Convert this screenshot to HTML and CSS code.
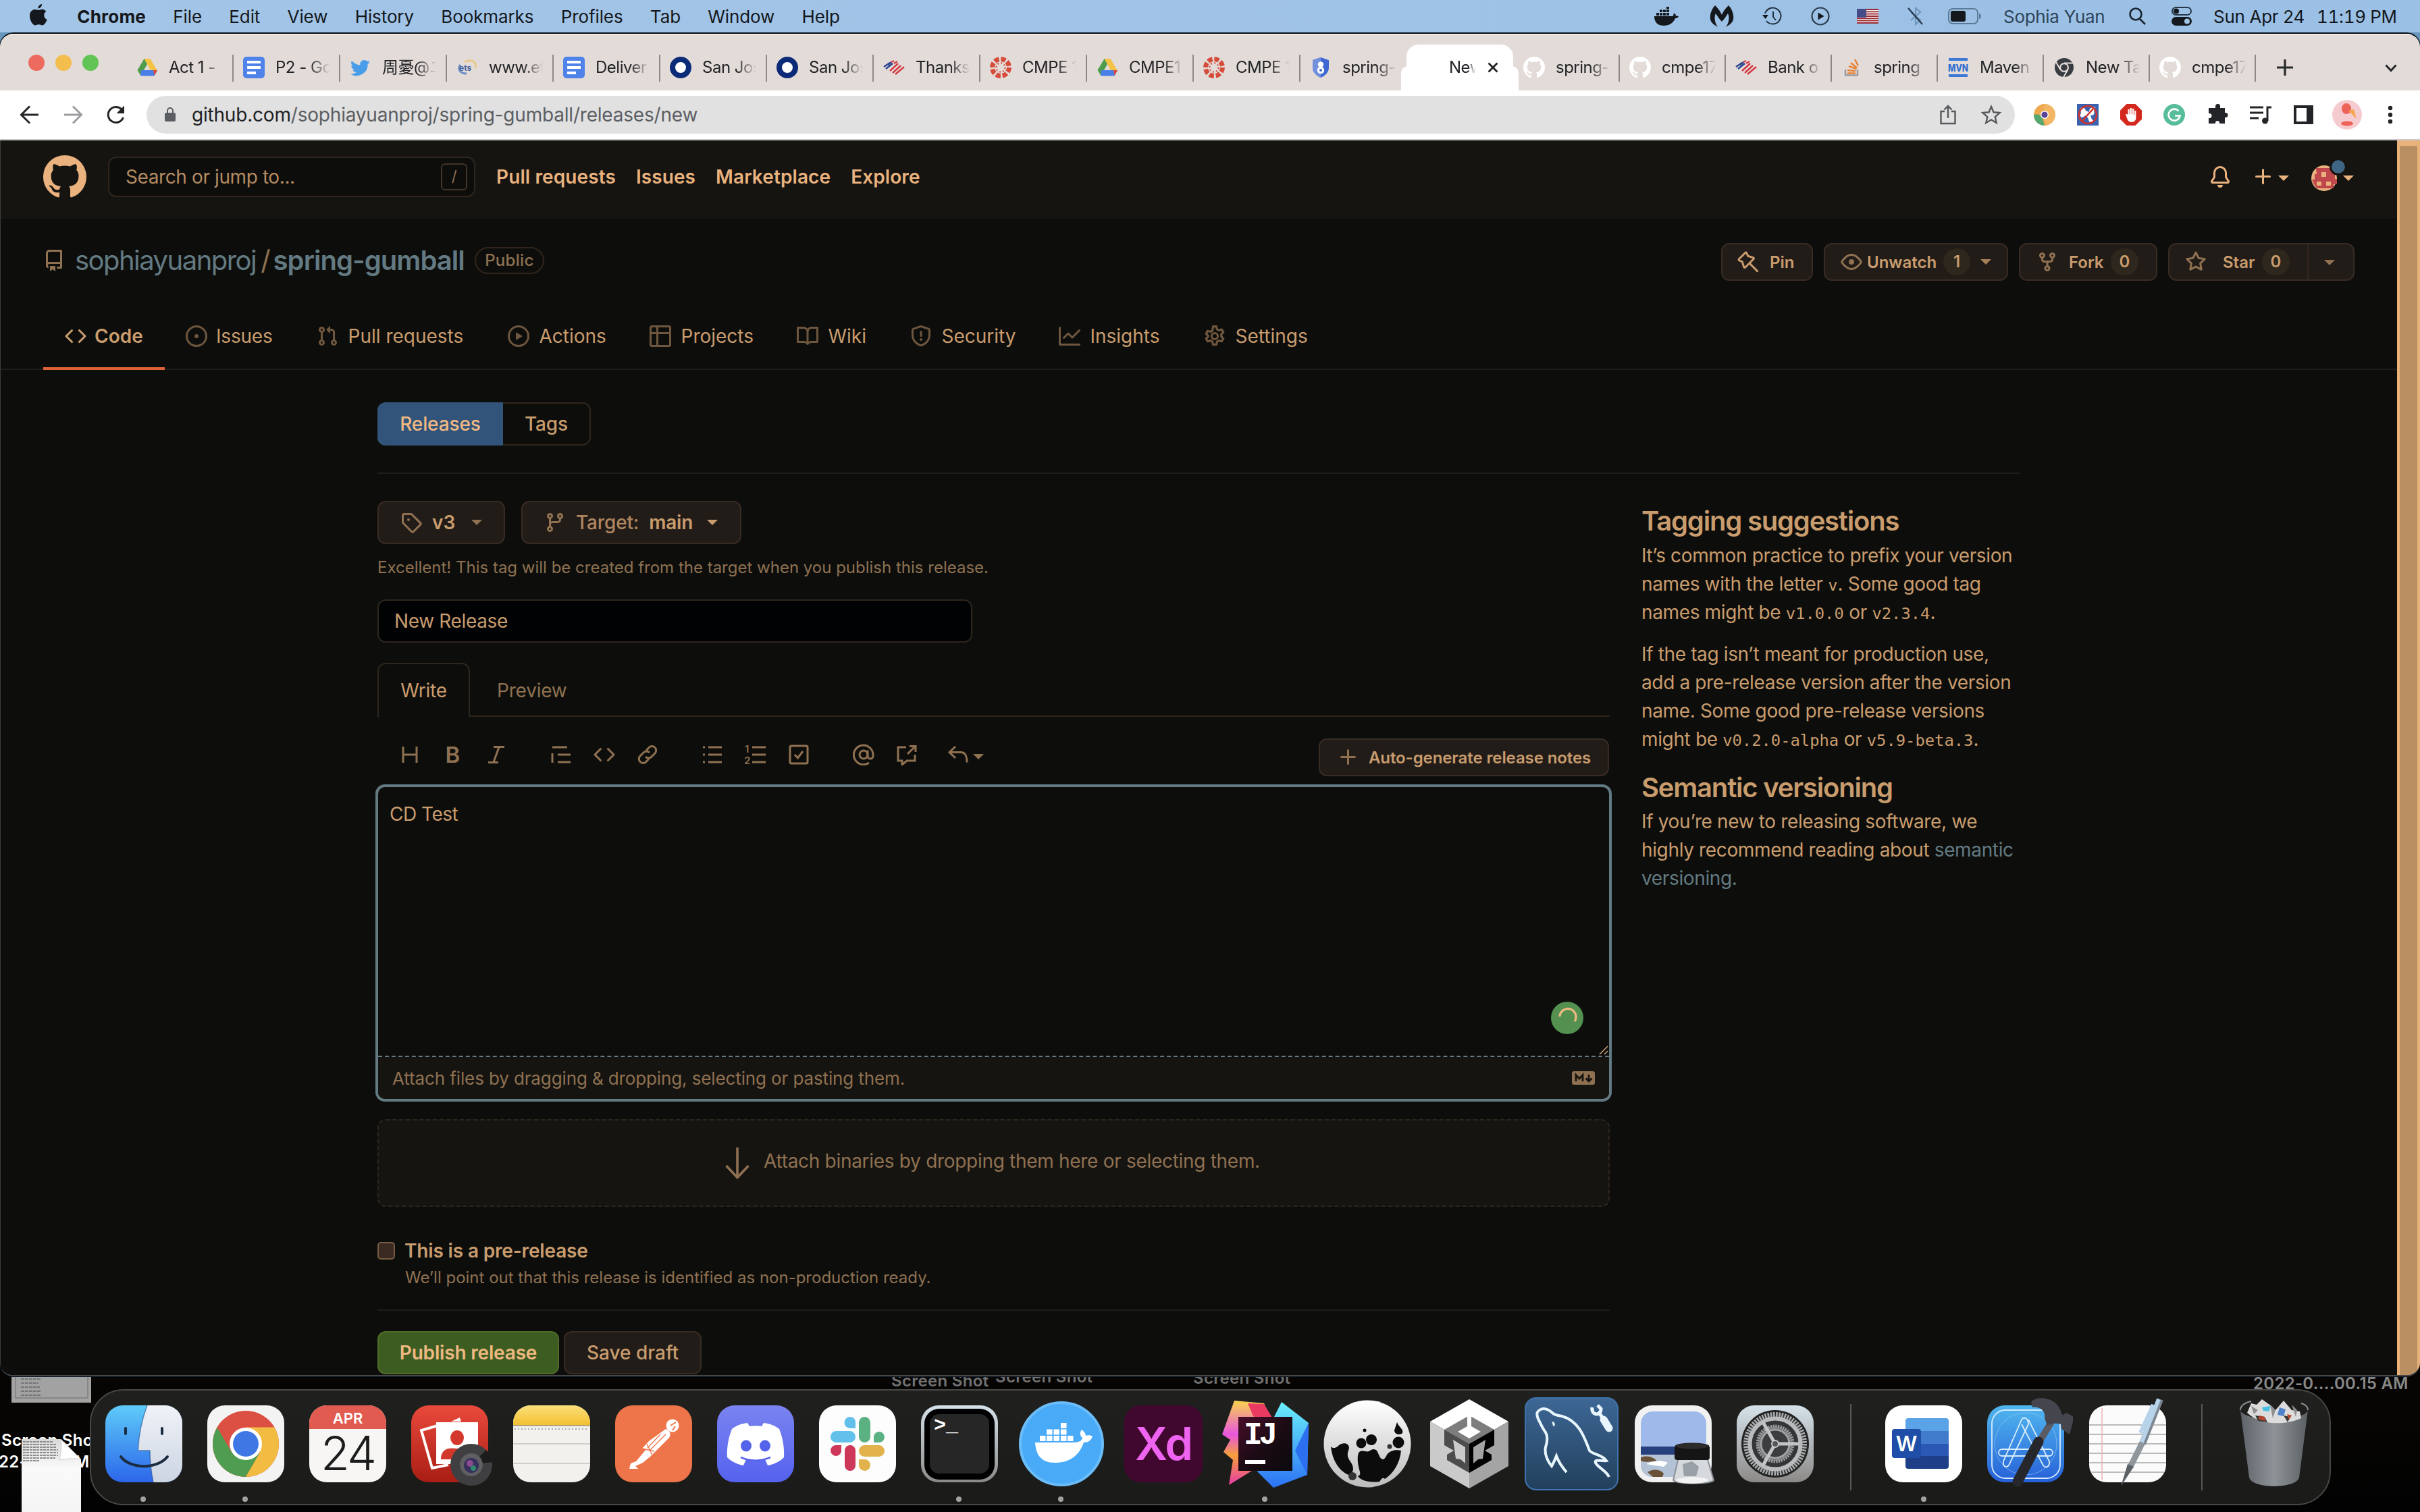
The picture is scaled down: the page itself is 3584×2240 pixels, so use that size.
FILE: index.html
```html
<!DOCTYPE html>
<html lang="en">
<head>
<meta charset="utf-8">
<title>New release · sophiayuanproj/spring-gumball</title>
<link rel="stylesheet" href="styles.css">
</head>
<body>
<svg class="defs" width="0" height="0" aria-hidden="true">
  <defs>
    <linearGradient id="g-finder" x1="0" y1="0" x2="0" y2="1"><stop offset="0" stop-color="#5ecbf9"/><stop offset="1" stop-color="#2c66ea"/></linearGradient>
    <linearGradient id="g-face" x1="0" y1="0" x2="0" y2="1"><stop offset="0" stop-color="#f0f2f8"/><stop offset="1" stop-color="#ccd5e2"/></linearGradient>
    <linearGradient id="g-red" x1="0" y1="0" x2="0" y2="1"><stop offset="0" stop-color="#ea4a3c"/><stop offset="1" stop-color="#a81d14"/></linearGradient>
    <linearGradient id="g-yellow" x1="0" y1="0" x2="0" y2="1"><stop offset="0" stop-color="#fbe07a"/><stop offset="1" stop-color="#f3c033"/></linearGradient>
    <linearGradient id="g-discord" x1="0" y1="0" x2="0" y2="1"><stop offset="0" stop-color="#7a83f0"/><stop offset="1" stop-color="#5562ee"/></linearGradient>
    <linearGradient id="g-steel" x1="0" y1="0" x2="0" y2="1"><stop offset="0" stop-color="#d5e2ea"/><stop offset="1" stop-color="#8c8a88"/></linearGradient>
    <linearGradient id="g-ball" x1="0" y1="0" x2="0" y2="1"><stop offset="0" stop-color="#ffffff"/><stop offset="1" stop-color="#bcbcbc"/></linearGradient>
    <linearGradient id="g-mysql" x1="0" y1="0" x2="0" y2="1"><stop offset="0" stop-color="#3d6796"/><stop offset="1" stop-color="#22405c"/></linearGradient>
    <linearGradient id="g-xcode" x1="0" y1="0" x2="0" y2="1"><stop offset="0" stop-color="#50b7ee"/><stop offset="1" stop-color="#2660d8"/></linearGradient>
    <linearGradient id="g-trash" x1="0" y1="0" x2="1" y2="0"><stop offset="0" stop-color="#5d6368"/><stop offset=".5" stop-color="#8d9397"/><stop offset="1" stop-color="#5b6064"/></linearGradient>
    <linearGradient id="g-ij1" x1="0" y1="0" x2="0" y2="1"><stop offset="0" stop-color="#f9d34c"/><stop offset=".4" stop-color="#e956df"/><stop offset=".65" stop-color="#f5a03a"/><stop offset="1" stop-color="#e83aa6"/></linearGradient>
    <linearGradient id="g-ij2" x1="0" y1="0" x2="0" y2="1"><stop offset="0" stop-color="#6af0fb"/><stop offset="1" stop-color="#2c72f5"/></linearGradient>
    <linearGradient id="g-ij3" x1="0" y1="0" x2="1" y2="1"><stop offset="0" stop-color="#4a0e2a"/><stop offset=".5" stop-color="#1c0b14"/><stop offset="1" stop-color="#0a0a0c"/></linearGradient>
    <linearGradient id="g-paper" x1="0" y1="0" x2="0" y2="1"><stop offset="0" stop-color="#d8d8d8"/><stop offset=".4" stop-color="#fafafa"/><stop offset="1" stop-color="#f4f4f4"/></linearGradient>
    <clipPath id="tile"><rect x="-57" y="-57" width="114" height="114" rx="26"/></clipPath>
    <symbol id="github" viewBox="0 0 16 16"><path fill-rule="evenodd" d="M8 0C3.58 0 0 3.58 0 8c0 3.54 2.29 6.53 5.47 7.59.4.07.55-.17.55-.38 0-.19-.01-.82-.01-1.49-2.01.37-2.53-.49-2.69-.94-.09-.23-.48-.94-.82-1.13-.28-.15-.68-.52-.01-.53.63-.01 1.08.58 1.23.82.72 1.21 1.87.87 2.33.66.07-.52.28-.87.51-1.07-1.78-.2-3.64-.89-3.64-3.95 0-.87.31-1.59.82-2.15-.08-.2-.36-1.02.08-2.12 0 0 .67-.21 2.2.82.64-.18 1.32-.27 2-.27.68 0 1.36.09 2 .27 1.53-1.04 2.2-.82 2.2-.82.44 1.1.16 1.92.08 2.12.51.56.82 1.27.82 2.15 0 3.07-1.87 3.75-3.65 3.95.29.25.54.73.54 1.48 0 1.07-.01 1.93-.01 2.2 0 .21.15.46.55.38A8.013 8.013 0 0016 8c0-4.42-3.58-8-8-8z"/></symbol>
    <symbol id="repo" viewBox="0 0 16 16"><path fill-rule="evenodd" d="M2 2.5A2.5 2.5 0 014.5 0h8.75a.75.75 0 01.75.75v12.5a.75.75 0 01-.75.75h-2.5a.75.75 0 110-1.5h1.75v-2h-8a1 1 0 00-.714 1.7.75.75 0 01-1.072 1.05A2.495 2.495 0 012 11.5v-9zm10.5-1V9h-8c-.356 0-.694.074-1 .208V2.5a1 1 0 011-1h8zM5 12.25v3.25a.25.25 0 00.4.2l1.45-1.087a.25.25 0 01.3 0L8.6 15.7a.25.25 0 00.4-.2v-3.25a.25.25 0 00-.25-.25h-3.5a.25.25 0 00-.25.25z"/></symbol>
    <symbol id="code" viewBox="0 0 16 16"><path fill-rule="evenodd" d="M4.72 3.22a.75.75 0 011.06 1.06L2.06 8l3.72 3.72a.75.75 0 11-1.06 1.06L.47 8.53a.75.75 0 010-1.06l4.25-4.25zm6.56 0a.75.75 0 10-1.06 1.06L13.94 8l-3.72 3.72a.75.75 0 101.06 1.06l4.25-4.25a.75.75 0 000-1.06l-4.25-4.25z"/></symbol>
    <symbol id="issue" viewBox="0 0 16 16"><path d="M8 9.5a1.5 1.5 0 100-3 1.5 1.5 0 000 3z"/><path fill-rule="evenodd" d="M8 0a8 8 0 100 16A8 8 0 008 0zM1.5 8a6.5 6.5 0 1113 0 6.5 6.5 0 01-13 0z"/></symbol>
    <symbol id="pr" viewBox="0 0 16 16"><path fill-rule="evenodd" d="M7.177 3.073L9.573.677A.25.25 0 0110 .854v4.792a.25.25 0 01-.427.177L7.177 3.427a.25.25 0 010-.354zM3.75 2.5a.75.75 0 100 1.5.75.75 0 000-1.5zm-2.25.75a2.25 2.25 0 113 2.122v5.256a2.251 2.251 0 11-1.5 0V5.372A2.25 2.25 0 011.5 3.25zM11 2.5h-1V4h1a1 1 0 011 1v5.628a2.251 2.251 0 101.5 0V5A2.5 2.5 0 0011 2.5zm1 10.25a.75.75 0 111.5 0 .75.75 0 01-1.5 0zM3.75 12a.75.75 0 100 1.5.75.75 0 000-1.5z"/></symbol>
    <symbol id="play" viewBox="0 0 16 16"><path fill-rule="evenodd" d="M1.5 8a6.5 6.5 0 1113 0 6.5 6.5 0 01-13 0zM8 0a8 8 0 100 16A8 8 0 008 0zM6.379 5.227A.25.25 0 006 5.442v5.117a.25.25 0 00.379.214l4.264-2.559a.25.25 0 000-.428L6.379 5.227z"/></symbol>
    <symbol id="project" viewBox="0 0 16 16"><path fill-rule="evenodd" d="M0 1.75C0 .784.784 0 1.75 0h12.5C15.216 0 16 .784 16 1.75v12.5A1.75 1.75 0 0114.25 16H1.75A1.75 1.75 0 010 14.25V1.75zM1.5 6.5v7.75c0 .138.112.25.25.25H5v-8H1.5zM5 5H1.5V1.75a.25.25 0 01.25-.25H5V5zm1.5 1.5v8h7.75a.25.25 0 00.25-.25V6.5h-8zm8-1.5h-8V1.5h7.75a.25.25 0 01.25.25V5z"/></symbol>
    <symbol id="book" viewBox="0 0 16 16"><path fill-rule="evenodd" d="M0 1.75A.75.75 0 01.75 1h4.253c1.227 0 2.317.59 3 1.501A3.744 3.744 0 0111.006 1h4.245a.75.75 0 01.75.75v10.5a.75.75 0 01-.75.75h-4.507a2.25 2.25 0 00-1.591.659l-.622.621a.75.75 0 01-1.06 0l-.622-.621A2.25 2.25 0 005.258 13H.75a.75.75 0 01-.75-.75V1.75zm8.755 3a2.25 2.25 0 012.25-2.25H14.5v9h-3.757c-.71 0-1.4.201-1.992.572l.004-7.322zm-1.504 7.324l.004-5.073-.002-2.253A2.25 2.25 0 005.003 2.5H1.5v9h3.757a3.75 3.75 0 011.994.574z"/></symbol>
    <symbol id="shield" viewBox="0 0 16 16"><path fill-rule="evenodd" d="M7.467.133a1.75 1.75 0 011.066 0l5.25 1.68A1.75 1.75 0 0115 3.48V7c0 1.566-.32 3.182-1.303 4.682-.983 1.498-2.585 2.813-5.032 3.855a1.7 1.7 0 01-1.33 0c-2.447-1.042-4.049-2.357-5.032-3.855C1.32 10.182 1 8.566 1 7V3.48a1.75 1.75 0 011.217-1.667l5.25-1.68zm.61 1.429a.25.25 0 00-.153 0l-5.25 1.68a.25.25 0 00-.174.238V7c0 1.358.275 2.666 1.057 3.86.784 1.194 2.121 2.34 4.366 3.297a.2.2 0 00.154 0c2.245-.956 3.582-2.104 4.366-3.298C13.225 9.666 13.5 8.36 13.5 7V3.48a.25.25 0 00-.174-.237l-5.25-1.68zM9 10.5a1 1 0 11-2 0 1 1 0 012 0zm-.25-5.75a.75.75 0 10-1.5 0v3a.75.75 0 001.5 0v-3z"/></symbol>
    <symbol id="graph" viewBox="0 0 16 16"><path fill-rule="evenodd" d="M1.5 1.75a.75.75 0 00-1.5 0v12.5c0 .414.336.75.75.75h14.5a.75.75 0 000-1.5H1.5V1.75zm14.28 2.53a.75.75 0 00-1.06-1.06L10 7.94 7.53 5.47a.75.75 0 00-1.06 0L3.22 8.72a.75.75 0 001.06 1.06L7 7.06l2.47 2.47a.75.75 0 001.06 0l5.25-5.25z"/></symbol>
    <symbol id="gear" viewBox="0 0 16 16"><g fill="none" stroke="currentColor" stroke-width="1.5" stroke-linejoin="round"><circle cx="8" cy="8" r="2.3"/><path d="M6.9.8h2.2l.5 2 1.2.7 2-.6 1.1 1.9-1.400 1.500v1.400l1.400 1.500-1.100 1.900-2-.5-1.200.7-.5 2H6.900l-.5-2-1.200-.7-2 .5-1.100-1.900 1.400-1.500V7.300L2.100 5.800l1.100-1.900 2 .6 1.200-.7z" transform="translate(-.64 -.1) scale(1.080)"/></g></symbol>
    <symbol id="pin" viewBox="0 0 16 16"><g fill="none" stroke="currentColor" stroke-width="1.5" stroke-linejoin="round" stroke-linecap="round"><path d="M5.900 1.200 1.200 5.900c-.3.3-.2.8.2 1l2.200.9 1.200 3.900c.1.5.7.7 1.100.3l6.100-6.100c.4-.4.2-1-.3-1.100L7.800 3.600l-.9-2.200c-.2-.4-.7-.5-1-.2zM9 9l5.800 5.800"/></g></symbol>
    <symbol id="eye" viewBox="0 0 16 16"><path fill-rule="evenodd" d="M1.679 7.932c.412-.621 1.242-1.75 2.366-2.717C5.175 4.242 6.527 3.5 8 3.5c1.473 0 2.824.742 3.955 1.715 1.124.967 1.954 2.096 2.366 2.717a.119.119 0 010 .136c-.412.621-1.242 1.75-2.366 2.717C10.825 11.758 9.473 12.5 8 12.5c-1.473 0-2.824-.742-3.955-1.715C2.92 9.818 2.09 8.69 1.679 8.068a.119.119 0 010-.136zM8 2c-1.981 0-3.67.992-4.933 2.078C1.797 5.169.88 6.423.43 7.1a1.619 1.619 0 000 1.798c.45.678 1.367 1.932 2.637 3.024C4.329 13.008 6.019 14 8 14c1.981 0 3.67-.992 4.933-2.078 1.27-1.091 2.187-2.345 2.637-3.023a1.619 1.619 0 000-1.798c-.45-.678-1.367-1.932-2.637-3.023C11.671 2.992 9.981 2 8 2zm0 8a2 2 0 100-4 2 2 0 000 4z"/></symbol>
    <symbol id="fork" viewBox="0 0 16 16"><path fill-rule="evenodd" d="M5 3.25a.75.75 0 11-1.5 0 .75.75 0 011.5 0zm0 2.122a2.25 2.25 0 10-1.5 0v.878A2.25 2.25 0 005.75 8.5h1.5v2.128a2.251 2.251 0 101.5 0V8.5h1.5a2.25 2.25 0 002.25-2.25v-.878a2.25 2.25 0 10-1.5 0v.878a.75.75 0 01-.75.75h-4.5A.75.75 0 015 6.25v-.878zm3.75 7.378a.75.75 0 11-1.5 0 .75.75 0 011.5 0zm3-8.75a.75.75 0 100-1.5.75.75 0 000 1.5z"/></symbol>
    <symbol id="star" viewBox="0 0 16 16"><path fill-rule="evenodd" d="M8 .25a.75.75 0 01.673.418l1.882 3.815 4.21.612a.75.75 0 01.416 1.279l-3.046 2.97.719 4.192a.75.75 0 01-1.088.791L8 12.347l-3.766 1.98a.75.75 0 01-1.088-.79l.72-4.194L.818 6.374a.75.75 0 01.416-1.28l4.21-.611L7.327.668A.75.75 0 018 .25zm0 2.445L6.615 5.5a.75.75 0 01-.564.41l-3.097.45 2.24 2.184a.75.75 0 01.216.664l-.528 3.084 2.769-1.456a.75.75 0 01.698 0l2.77 1.456-.53-3.084a.75.75 0 01.216-.664l2.24-2.183-3.096-.45a.75.75 0 01-.564-.41L8 2.694v.001z"/></symbol>
    <symbol id="tag" viewBox="0 0 16 16"><path fill-rule="evenodd" d="M2.5 7.775V2.75a.25.25 0 01.25-.25h5.025a.25.25 0 01.177.073l6.25 6.25a.25.25 0 010 .354l-5.025 5.025a.25.25 0 01-.354 0l-6.25-6.25a.25.25 0 01-.073-.177zm-1.5 0V2.75C1 1.784 1.784 1 2.75 1h5.025c.464 0 .91.184 1.238.513l6.25 6.25a1.75 1.75 0 010 2.474l-5.026 5.026a1.75 1.75 0 01-2.474 0l-6.25-6.25A1.75 1.75 0 011 7.775zM6 5a1 1 0 100 2 1 1 0 000-2z"/></symbol>
    <symbol id="branch" viewBox="0 0 16 16"><path fill-rule="evenodd" d="M11.75 2.5a.75.75 0 100 1.5.75.75 0 000-1.5zm-2.25.75a2.25 2.25 0 113 2.122V6A2.5 2.5 0 0110 8.5H6a1 1 0 00-1 1v1.128a2.251 2.251 0 11-1.5 0V5.372a2.25 2.25 0 111.5 0v1.836A2.492 2.492 0 016 7h4a1 1 0 001-1v-.628A2.25 2.25 0 019.5 3.25zM4.25 12a.75.75 0 100 1.5.75.75 0 000-1.5zM3.5 3.25a.75.75 0 111.5 0 .75.75 0 01-1.5 0z"/></symbol>
    <symbol id="bell" viewBox="0 0 16 16"><path d="M8 16a2 2 0 001.985-1.75c.017-.137-.097-.25-.235-.25h-3.5c-.138 0-.252.113-.235.25A2 2 0 008 16z"/><path fill-rule="evenodd" d="M8 1.5A3.5 3.5 0 004.5 5v2.947c0 .346-.102.683-.294.97l-1.703 2.556a.018.018 0 00-.003.01l.001.006.002.004.006.006H13.5l.006-.006.002-.004.001-.006-.003-.01-1.703-2.554a1.75 1.75 0 01-.294-.97V5A3.5 3.5 0 008 1.5zM3 5a5 5 0 0110 0v2.947c0 .05.015.098.042.139l1.703 2.555A1.518 1.518 0 0113.482 13H2.518a1.518 1.518 0 01-1.263-2.36l1.703-2.554A.25.25 0 003 7.947V5z"/></symbol>
    <symbol id="plus" viewBox="0 0 16 16"><path d="M7.75 2a.75.75 0 01.75.75V7h4.25a.75.75 0 110 1.5H8.5v4.25a.75.75 0 11-1.5 0V8.5H2.75a.75.75 0 010-1.5H7V2.75A.75.75 0 017.75 2z"/></symbol>
    <symbol id="drive" viewBox="0 0 32 32"><path fill="#4f9d4c" d="M11.5 3h9l-9.5 17-4.6 8L1.500 20z"/><path fill="#f5c244" d="M11.500 3h9l10 17h-9.500z"/><path fill="#4a7fe8" d="M7 20h24l-4.500 8.500H6z"/><path fill="#d9483b" d="M25 20h6l-4.500 8z"/></symbol>
    <symbol id="docs" viewBox="0 0 32 32"><rect width="32" height="32" rx="5" fill="#4f83ea"/><path fill="#fff" d="M6 6h20v4H6zM6 14h20v4H6zM6 22h13v4H6z"/></symbol>
    <symbol id="ring" viewBox="0 0 32 32"><circle cx="16" cy="16" r="12" fill="#fff" stroke="#0b2a78" stroke-width="8"/></symbol>
    <symbol id="boa" viewBox="0 0 32 32"><g fill="none" stroke-width="2.400"><path stroke="#2a4290" d="M1 15l9-6M4 18l10-8M7 12l5-4"/><path stroke="#d33b44" d="M12 8l4-2M16 10l5-3M10 21l12-11M14 24l12-11M18 26l13-11"/></g></symbol>
    <symbol id="canvas" viewBox="0 0 32 32"><circle cx="16" cy="16" r="12.500" fill="none" stroke="#d64b3a" stroke-width="7" stroke-dasharray="7 2.817"/><circle cx="16" cy="16" r="6.600" fill="none" stroke="#d64b3a" stroke-width="2.200" stroke-dasharray="2 3.180"/></symbol>
    <symbol id="stack" viewBox="0 0 32 32"><path fill="none" stroke="#9a9ba0" stroke-width="2.500" d="M6 19v8.500h18V19"/><path fill="none" stroke="#e58437" stroke-width="2.600" d="M9 24.500h12M9 20l12 1.300M11 14l11.500 4M14 9l9 7.500M20 4l5 9.500"/></symbol>
  </defs>
</svg>

<header class="menubar">
  <nav class="menus">
    <svg class="apple" viewBox="0 0 26 32"><path d="M18 0c.3 3-2.300 6.500-5.500 6.500C12 3.500 15 .3 18 0zM13 9c1.500 0 3-1.300 5.500-1.300 2.200 0 4.600 1.300 6 3.300-5 3-4 10 1.200 12-1.500 4-4.200 8.500-7 8.500-2 0-2.700-1.200-5.200-1.200-2.600 0-3.400 1.200-5.200 1.200C4.500 31.500 0 24 0 17.500 0 11.500 3.800 8 7.600 8c2.300 0 4 1 5.400 1z"/></svg>
    <b>Chrome</b><span>File</span><span>Edit</span><span>View</span><span>History</span><span>Bookmarks</span><span>Profiles</span><span>Tab</span><span>Window</span><span>Help</span>
  </nav>
  <div class="status">
    <svg width="36" height="28" viewBox="0 0 36 28"><path d="M0 14h28c0-2 .5-3.500 1.500-4.500 2 1 2.500 3 2.300 4.300 1.500-.5 3-.2 4.200.4-1 2.300-3 3-5 3C28 24 22 28 14 28 6 28 0 24 0 14z"/><path d="M3 9h4v4H3zM8 9h4v4H8zM13 9h4v4h-4zM18 9h4v4h-4zM8 4.500h4v3.500H8zM13 4.500h4v3.500h-4zM18 4.500h4v3.500h-4zM18 0h4v3.500h-4z"/></svg>
    <svg width="36" height="32" viewBox="0 0 36 32"><path d="M8 0c3 3 7 7 10 14C21 7 25 3 28 0c6 6 10 19 5 25-2 3-6 5-9 7 4-5 6-14 3-20-3 5-6 9-9 12-3-3-6-7-9-12-3 6-1 15 3 20-3-2-7-4-9-7C-2 19 2 6 8 0z"/></svg>
    <svg width="30" height="28" viewBox="0 0 30 28"><g fill="none" stroke="#1f3040" stroke-width="2"><path d="M4 10A12 12 0 1 1 6 21"/><path d="M16 7v8l4 5"/></g><path d="M0 12h9l-4.500 6z"/></svg>
    <svg width="28" height="28" viewBox="0 0 28 28"><circle cx="14" cy="14" r="12.500" fill="none" stroke="#2a3b4c" stroke-width="2.200"/><path d="M10.500 8.500v11l9-5.500z"/></svg>
    <svg width="32" height="22" viewBox="0 0 32 22"><path fill="#f4eef0" d="M0 0h32v22H0z"/><path stroke="#9c2c34" stroke-width="1.800" d="M0 1h32M0 4.300h32M0 7.700h32M0 11h32M0 14.300h32M0 17.700h32M0 21h32"/><path fill="#454b86" d="M0 0h14v13H0z"/></svg>
    <svg width="24" height="28" viewBox="0 0 24 28"><path fill="none" stroke="#6f93b8" stroke-width="2.200" d="M5 8l14 12-7 6V2l7 6L5 20"/><path stroke="#22384e" stroke-width="2.200" d="M1 2l21 24"/></svg>
    <svg width="50" height="24" viewBox="0 0 50 24"><rect x="1" y="1" width="43" height="22" rx="6" fill="none" stroke="#5b7a97" stroke-width="2"/><rect x="4" y="4" width="22" height="16" rx="3"/><path fill="#5b7a97" d="M46 8c4 1 4 7 0 8z"/></svg>
    <span class="dim">Sophia Yuan</span>
    <svg width="25" height="26" viewBox="0 0 25 26"><g fill="none" stroke="#182430" stroke-width="2.600"><circle cx="10" cy="10" r="8.500"/><path d="M16 17l8 8"/></g></svg>
    <svg width="30" height="28" viewBox="0 0 30 28"><rect x="1" y="1" width="28" height="11" rx="5.500" fill="none" stroke="#26384a" stroke-width="2"/><circle cx="7" cy="6.500" r="4"/><rect y="15" width="30" height="13" rx="6.500"/><circle cx="23" cy="21.500" r="4" fill="#a1c4e7"/></svg>
    <span>Sun Apr 24</span><span class="clock">11:19 PM</span>
  </div>
</header>

<section class="desktop">
  <div class="window">
    <div class="tabstrip">
      <div class="lights"><i class="red"></i><i class="amber"></i><i class="green"></i></div>
      <div class="tab"><svg><use href="#drive"/></svg><span>Act 1 -</span></div>
      <div class="tab"><svg><use href="#docs"/></svg><span>P2 - Go</span></div>
      <div class="tab"><svg viewBox="0 0 32 32"><path fill="#4a9ee9" d="M30 7.500c-1 .6-2.200.9-3.300 1 1.200-.7 2-1.800 2.500-3.100-1.200.7-2.400 1.100-3.700 1.400a6 6 0 0 0-10.100 5.400C10.500 12 6 9.600 3 6c-1.600 2.700-.8 6.200 1.800 7.900-1 0-1.800-.3-2.600-.7 0 2.800 2 5.300 4.700 5.900-.9.200-1.700.2-2.600.1.700 2.300 2.900 4 5.500 4A12 12 0 0 1 1 25.500 16.500 16.500 0 0 0 26.600 11c1.300-1 2.500-2 3.400-3.500z"/></svg><span>周憂@ニ</span></div>
      <div class="tab"><svg viewBox="0 0 32 32"><path fill="none" stroke="#e8c88c" stroke-width="3" d="M12 8c9-5 19-1 16 9"/><path fill="none" stroke="#6d8cc4" stroke-width="3" d="M6 12c-5 6-1 13 9 13"/><text x="4" y="21" font-size="12" font-weight="700" fill="#44619f">ets</text></svg><span>www.et</span></div>
      <div class="tab"><svg><use href="#docs"/></svg><span>Deliver</span></div>
      <div class="tab"><svg><use href="#ring"/></svg><span>San Jos</span></div>
      <div class="tab"><svg><use href="#ring"/></svg><span>San Jos</span></div>
      <div class="tab"><svg><use href="#boa"/></svg><span>Thanks</span></div>
      <div class="tab"><svg><use href="#canvas"/></svg><span>CMPE 1</span></div>
      <div class="tab"><svg><use href="#drive"/></svg><span>CMPE1</span></div>
      <div class="tab"><svg><use href="#canvas"/></svg><span>CMPE 1</span></div>
      <div class="tab last"><svg viewBox="0 0 32 32"><path fill="#3f69d2" d="M16 1l12 4v11c0 7-5 12-12 15C9 28 4 23 4 16V5z"/><path fill="#7390dd" d="M16 1v30C9 28 4 23 4 16V5z"/><circle cx="16" cy="11.500" r="4.200" fill="#fff"/><circle cx="16" cy="20" r="5.200" fill="#fff"/><circle cx="16" cy="20" r="2" fill="#3f69d2"/></svg><span>spring-</span></div>
      <div class="tab active"><span>New</span><svg class="close" viewBox="0 0 16 16"><path d="M1.500 1.500l13 13M14.500 1.500l-13 13" stroke="#222" stroke-width="2.800"/></svg></div>
      <div class="tab narrow"><svg class="white"><use href="#github"/></svg><span>spring-</span></div>
      <div class="tab narrow"><svg class="white"><use href="#github"/></svg><span>cmpe17</span></div>
      <div class="tab narrow"><svg><use href="#boa"/></svg><span>Bank o</span></div>
      <div class="tab narrow"><svg><use href="#stack"/></svg><span>spring</span></div>
      <div class="tab narrow"><svg viewBox="0 0 32 32"><path fill="#3b78d8" d="M2 2h28v4H2zM2 26h28v4H2z"/><text x="1" y="22" font-size="15" font-weight="800" fill="#2f6fd0" textLength="30" lengthAdjust="spacingAndGlyphs">MVN</text></svg><span>Maven</span></div>
      <div class="tab narrow"><svg viewBox="0 0 32 32"><circle cx="16" cy="16" r="14" fill="#393d42"/><circle cx="16" cy="16" r="7" fill="#e3dbd8"/><circle cx="16" cy="16" r="4.800" fill="#393d42"/><path stroke="#e3dbd8" stroke-width="2" d="M16 9.500h13M10.500 19.500L4 8M21.500 19L15 30.500"/></svg><span>New Ta</span></div>
      <div class="tab narrow"><svg class="white"><use href="#github"/></svg><span>cmpe17</span></div>
      <svg class="newtab" viewBox="0 0 26 26"><path d="M13 1v24M1 13h24" stroke="#26282a" stroke-width="3.200"/></svg>
      <svg class="chev" viewBox="0 0 18 12"><path d="M1.500 1.500L9 9.500l7.500-8" fill="none" stroke="#26282a" stroke-width="3"/></svg>
    </div>

    <div class="toolbar">
      <div class="navbtns">
        <svg viewBox="0 0 32 32"><path d="M29 16H4M16 3.500L3.500 16 16 28.500" fill="none" stroke="#222427" stroke-width="3"/></svg>
        <svg viewBox="0 0 32 32"><path d="M3 16h25M16 3.500L28.500 16 16 28.500" fill="none" stroke="#9b9da0" stroke-width="3"/></svg>
        <svg viewBox="0 0 32 32"><path d="M26.500 20A11.500 11.500 0 1 1 24 8" fill="none" stroke="#222427" stroke-width="3"/><path d="M28 2.500v11.500H16.500z" fill="#222427"/></svg>
      </div>
      <div class="omnibox">
        <svg class="lock" viewBox="0 0 16 22"><rect y="8" width="16" height="13" rx="2" fill="#5a5d62"/><path d="M4 9V5a4 4 0 0 1 8 0v4" fill="none" stroke="#5a5d62" stroke-width="2"/></svg>
        <span class="url"><b>github.com</b>/sophiayuanproj/spring-gumball/releases/new</span>
        <svg class="share" viewBox="0 0 24 30"><path d="M7 10H1.500v18h21V10H17M12 20V2M6.500 7.500L12 2l5.500 5.500" fill="none" stroke="#55585c" stroke-width="2.400"/></svg>
        <svg class="bm" viewBox="0 0 30 30"><path d="M15 3l3.500 8.300 9 .8-6.800 6 2 8.900-7.700-4.700L7.300 27l2-8.900-6.800-6 9-.8z" fill="none" stroke="#55585c" stroke-width="2.400"/></svg>
      </div>
      <div class="exts">
        <svg viewBox="0 0 32 32"><circle cx="16" cy="16" r="16" fill="#efa950"/><path fill="#56a770" d="M0 16c6-2 10 0 13 5l3 11C7 32 0 25 0 16z"/><path fill="#f3c073" d="M16 0c9 0 16 7 16 16 0 7-5 14-12 16L14 20z" opacity=".6"/><circle cx="16" cy="16" r="6" fill="#fff"/><circle cx="16" cy="16" r="4.600" fill="#5a4497"/></svg>
        <svg viewBox="0 0 32 32"><rect width="32" height="32" fill="#3a62ae"/><path fill="#fff" d="M5 6c4-2 7 0 8 4l5 2c0-5 3-8 9-7l-2 6c2 4-1 6-5 6l2 6c2 0 3 3 0 5-4-1-5-3-5-6l-4-5-5 3c-4-1-4-4-2-6z"/><circle cx="16" cy="16" r="13" fill="none" stroke="#d0342c" stroke-width="2.600"/><path stroke="#d0342c" stroke-width="2.600" d="M25 6L7 26"/></svg>
        <svg viewBox="0 0 32 32"><path fill="#d3281d" d="M9.500 0h13L32 9.500v13L22.500 32h-13L0 22.500v-13z"/><path fill="#fff" d="M8 15h2.500l1 2V8h2.300v7h.9V6h2.400v9h.9V7h2.300v9h.9v-6h2.200v11c0 3-3 6-6.500 6-4 0-6-3-7-6z"/></svg>
        <svg viewBox="0 0 32 32"><circle cx="16" cy="16" r="16" fill="#58bd9b"/><path d="M22.500 10.500a8.500 8.500 0 1 0 2 7H17" fill="none" stroke="#fff" stroke-width="2.600"/></svg>
        <svg viewBox="0 0 32 32"><path fill="#222427" d="M13 3a3.500 3.500 0 0 1 7 1v2h7v7h1a3.500 3.500 0 0 1 0 7h-1v9h-8v-1a3 3 0 0 0-6 0v1H3v-8h1a3 3 0 0 0 0-7H3V6h10z"/></svg>
        <svg viewBox="0 0 32 32"><path d="M0 5h20M0 13h20M0 21h13M26 25V5h6" fill="none" stroke="#222427" stroke-width="3"/><circle cx="22.500" cy="25" r="4.500" fill="#222427"/></svg>
        <svg viewBox="0 0 32 32"><rect x="3" y="4" width="25" height="24" fill="none" stroke="#222427" stroke-width="4"/><path fill="#222427" d="M20 3h9v26h-9z"/></svg>
        <svg class="me" viewBox="0 0 44 44"><circle cx="22" cy="22" r="22" fill="#f6cbd0"/><ellipse cx="21" cy="13" rx="7" ry="8" fill="#ee6259"/><path fill="#f2a64e" d="M24 16l8-2 4 14z"/><ellipse cx="22" cy="35" rx="9" ry="3.500" fill="#ee6259"/></svg>
        <svg class="dots" viewBox="0 0 8 28"><circle cx="4" cy="4" r="3.200"/><circle cx="4" cy="14" r="3.200"/><circle cx="4" cy="24" r="3.200"/></svg>
      </div>
    </div>

    <div class="viewport">
      <div class="page">
        <div class="topbar">
          <svg class="logo"><use href="#github"/></svg>
          <div class="search"><span>Search or jump to...</span><kbd>/</kbd></div>
          <nav class="links"><a>Pull requests</a><a>Issues</a><a>Marketplace</a><a>Explore</a></nav>
          <div class="user">
            <svg class="i32"><use href="#bell"/></svg>
            <svg class="i32 add"><use href="#plus"/></svg><i class="caret"></i>
            <div class="avatar"><svg viewBox="0 0 40 40"><circle cx="20" cy="20" r="19" fill="#e9b27e"/><path fill="#c0474c" d="M8 5h24v6h4v10h3v8h-5v6H9l-4-6-3-7h4v-8h3z"/><path fill="#e9b27e" d="M16 11h7v7h-7zM9 25h7v6H9zM23 25h7v6h-7z"/></svg><i class="dot"></i></div>
            <i class="caret"></i>
          </div>
        </div>

        <div class="repohead">
          <svg class="i32"><use href="#repo"/></svg>
          <h1><a>sophiayuanproj</a><em>/</em><a class="name">spring-gumball</a></h1>
          <span class="pill">Public</span>
          <div class="actions">
            <div class="btn pin"><svg class="i32"><use href="#pin"/></svg>Pin</div>
            <div class="btn watch"><svg class="i32"><use href="#eye"/></svg>Unwatch<span class="count">1</span><i class="caret"></i></div>
            <div class="btn fork"><svg class="i32"><use href="#fork"/></svg>Fork<span class="count">0</span></div>
            <div class="btn star"><svg class="i32"><use href="#star"/></svg>Star<span class="count">0</span><span class="more"><i class="caret"></i></span></div>
          </div>
        </div>

        <nav class="tabs">
          <a class="on"><svg class="i32"><use href="#code"/></svg>Code</a>
          <a><svg class="i32"><use href="#issue"/></svg>Issues</a>
          <a><svg class="i32"><use href="#pr"/></svg>Pull requests</a>
          <a><svg class="i32"><use href="#play"/></svg>Actions</a>
          <a><svg class="i32"><use href="#project"/></svg>Projects</a>
          <a><svg class="i32"><use href="#book"/></svg>Wiki</a>
          <a><svg class="i32"><use href="#shield"/></svg>Security</a>
          <a><svg class="i32"><use href="#graph"/></svg>Insights</a>
          <a><svg class="i32"><use href="#gear"/></svg>Settings</a>
        </nav>

        <main class="container">
          <div class="subnav"><a class="sel">Releases</a><a>Tags</a></div>
          <div class="cols">
            <form class="maincol">
              <div class="pickers">
                <div class="btn big tagbtn"><svg class="i32"><use href="#tag"/></svg><b>v3</b><i class="caret"></i></div>
                <div class="btn big target"><svg class="i32"><use href="#branch"/></svg><span>Target:</span><b>main</b><i class="caret"></i></div>
              </div>
              <p class="note">Excellent! This tag will be created from the target when you publish this release.</p>
              <div class="input">New Release</div>
              <div class="wtabs"><span class="write">Write</span><span class="preview">Preview</span></div>
              <div class="tools">
                <div class="grp">
                  <svg viewBox="0 0 32 32"><path d="M6 4v24M26 4v24M6 16h20"/></svg>
                  <svg viewBox="0 0 32 32"><text x="4.500" y="28" font-size="33" font-weight="600">B</text></svg>
                  <svg viewBox="0 0 32 32"><path d="M12 4.500h16M4 27.500h15M20 5l-8 22"/></svg>
                </div>
                <div class="grp">
                  <svg viewBox="0 0 32 32"><path d="M3 5h22M11 16h19M11 27h19M3 14v14"/></svg>
                  <svg class="f"><use href="#code"/></svg>
                  <svg viewBox="0 0 32 32"><path d="M14 10l4-4.500a6 6 0 0 1 9 8.500l-5 5a6 6 0 0 1-9 0M18 22l-4 4.500a6 6 0 0 1-9-8.500l5-5a6 6 0 0 1 9 0"/></svg>
                </div>
                <div class="grp">
                  <svg viewBox="0 0 32 32"><path d="M10 5h20M10 16h20M10 27h20M2 5h3M2 16h3M2 27h3"/></svg>
                  <svg viewBox="0 0 32 32"><path d="M11 5h20M11 16h20M11 27h20"/><text x="0" y="13" font-size="15" font-weight="600">1</text><text x="-1" y="30" font-size="15" font-weight="600">2</text></svg>
                  <svg viewBox="0 0 32 32"><rect x="3" y="3" width="26" height="26" rx="2"/><path d="M10 16l4.500 5L22 11"/></svg>
                </div>
                <div class="grp">
                  <svg viewBox="0 0 32 32"><circle cx="16" cy="16" r="6"/><path d="M22 9.500V18a4 4 0 0 0 8 0v-2A14.300 14.300 0 1 0 24 28"/></svg>
                  <svg viewBox="0 0 32 32"><path d="M15 5H3v20h6v6l7-6h12v-9M17 15L27 5M20 3.500h9V12"/></svg>
                </div>
                <div class="grp reply">
                  <svg viewBox="0 0 32 32"><path d="M12 4L3 12.500l9 8.500M4 12.500h16c6 0 9 4 9 15"/></svg>
                  <i class="caret"></i>
                </div>
                <div class="btn gen"><svg class="i32"><use href="#plus"/></svg>Auto-generate release notes</div>
              </div>
              <div class="editor">
                <div class="area">CD Test
                  <svg class="badge" viewBox="0 0 48 48"><circle cx="24" cy="24" r="24" fill="#549150"/><path d="M13 22A12 12 0 1 1 35 29" fill="none" stroke="#efb981" stroke-width="3.200"/></svg>
                  <svg class="grip" viewBox="0 0 14 14"><path d="M1 13L13 1M8 13l5-5" stroke="#c9a27a" stroke-width="1.500"/></svg>
                </div>
                <div class="attach"><span>Attach files by dragging &amp; dropping, selecting or pasting them.</span>
                  <svg viewBox="0 0 34 20"><rect width="34" height="20" rx="3" fill="#8f7152"/><path d="M6 15V5.500l5 5.500 5-5.500V15M25 5v8M20.500 10.500L25 15l4.500-4.500" fill="none" stroke="#161410" stroke-width="2.800"/></svg></div>
              </div>
              <div class="drop"><svg viewBox="0 0 38 48"><path d="M19 1v44M2.500 28L19 45.500 35.500 28" fill="none" stroke="#8f7152" stroke-width="3.600"/></svg><span>Attach binaries by dropping them here or selecting them.</span></div>
              <div class="pre"><i class="check"></i><b>This is a pre-release</b></div>
              <p class="prenote">We’ll point out that this release is identified as non-production ready.</p>
              <div class="submit"><div class="btn big publish">Publish release</div><div class="btn big draft">Save draft</div></div>
            </form>
            <aside class="side">
              <h2>Tagging suggestions</h2>
              <p>It’s common practice to prefix your version<br>names with the letter <code>v</code>. Some good tag<br>names might be <code>v1.0.0</code> or <code>v2.3.4</code>.</p>
              <p>If the tag isn’t meant for production use,<br>add a pre-release version after the version<br>name. Some good pre-release versions<br>might be <code>v0.2.0-alpha</code> or <code>v5.9-beta.3</code>.</p>
              <h2>Semantic versioning</h2>
              <p>If you’re new to releasing software, we<br>highly recommend reading about <a>semantic<br>versioning.</a></p>
            </aside>
          </div>
        </main>
      </div>
      <div class="scroll"><i></i></div>
    </div>
  </div>

  <div class="files">
    <svg class="thumb" viewBox="0 0 118 38"><path fill="#a2a2a2" d="M0 0h118v38H0z"/><path fill="none" stroke="#6c6c6c" d="M6 0v31h107V0"/><path stroke="#666" stroke-width="1.500" stroke-dasharray="5 1" d="M14 3h30M14 9h26M14 15h28M14 21h30M14 27h30"/></svg>
    <span class="lbl l1">Screen Shot</span>
    <span class="lbl l2">22-</span>
    <span class="lbl l3">M</span>
    <svg class="doc" viewBox="0 0 88 108"><path fill="url(#g-paper)" d="M0 0h58l30 30v78H0z"/><path stroke="#8c8c8c" stroke-width="2" stroke-dasharray="4 1" d="M2 4h44M2 8h50M2 12h50M2 16h52M2 20h52M2 24h52M2 28h48M2 32h24"/><path fill="#fff" stroke="#ccc" d="M58 0c2 10 0 20-2 31 10-2 22-3 32-1z"/></svg>
    <span class="lbl g1">Screen Shot</span>
    <span class="lbl g2">Screen Shot</span>
    <span class="lbl g3">Screen Shot</span>
    <span class="lbl g4">2022-0....00.15 AM</span>
  </div>

  <footer class="dock">
    <div class="app run"><svg viewBox="-70 -80 140 160"><g clip-path="url(#tile)"><path fill="url(#g-finder)" d="M-57-57H57V57H-57z"/><path fill="url(#g-face)" d="M5-57C-5-30-8-5-8.500 10H9c0 16 2 32 5 47h43V-57z"/></g><path stroke="#1b2b40" stroke-width="4" stroke-linecap="round" fill="none" d="M-27-23v8M27-23v8M-34 19C-20 38 20 38 35 19"/><path d="M5-57C-5-30-8-5-8.500 10H9c0 16 2 32 5 47" fill="none" stroke="#26518f" stroke-width="1.500" opacity=".6"/></svg></div>
    <div class="app run"><svg viewBox="-70 -80 140 160"><rect x="-57" y="-57" width="114" height="114" rx="26" fill="#f3f3f3"/><circle r="49" fill="#dc5044"/><path fill="#4f9d51" d="M-42.400-24.500A49 49 0 0 0 0 49L21.200 12.200-21.200 12.200z"/><path fill="#f2bc42" d="M42.400-24.500A49 49 0 0 1 0 49L21.200 12.200 0-24.500z"/><circle r="24" fill="#fff"/><circle r="19" fill="#3f78e4"/></svg></div>
    <div class="app"><svg viewBox="-70 -80 140 160"><g clip-path="url(#tile)"><path fill="#f7f6f4" d="M-57-57H57V57H-57z"/><path fill="#e25b50" d="M-57-57H57v35H-57z"/></g><text y="-30" text-anchor="middle" font-size="22" font-weight="600" fill="#fff">APR</text><text y="39" text-anchor="middle" font-size="70" font-weight="300" letter-spacing="-3" fill="#1c1c1c">24</text></svg></div>
    <div class="app"><svg viewBox="-70 -80 140 160"><rect x="-57" y="-57" width="114" height="114" rx="26" fill="url(#g-red)"/><path fill="none" stroke="#fff" stroke-width="4" d="M-18-27l-24 7 16 56 24-5"/><path fill="#fff" d="M-20-32h62v62h-62zM2-33l13-6 2 6z"/><ellipse cx="11" cy="-9" rx="10" ry="11" fill="#d3382c"/><path fill="#d3382c" d="M-13 23c0-15 10-18 24-16s24 3 24 16z"/><circle cx="32" cy="31" r="31" fill="#3f3f41"/><path fill="#1c1c1d" d="M32 31l22-22a31 31 0 0 1 9 18z"/><circle cx="32" cy="31" r="17" fill="#5f5f63"/><circle cx="32" cy="32" r="11" fill="#35305c"/><circle cx="30" cy="29" r="5" fill="#8a4a90"/><circle cx="35" cy="36" r="4" fill="#2f8a6c"/></svg></div>
    <div class="app"><svg viewBox="-70 -80 140 160"><g clip-path="url(#tile)"><path fill="#f2f1ee" d="M-57-57H57V57H-57z"/><path fill="url(#g-yellow)" d="M-57-57H57v29H-57z"/><path stroke="#9a8c5c" stroke-width="1.500" d="M-57-27H57"/><path stroke="#aaa" stroke-width="2" stroke-dasharray="2 3" d="M-55-22H55"/><path stroke="#cfcecb" stroke-width="2" d="M-57 0H57M-57 29H57"/></g></svg></div>
    <div class="app"><svg viewBox="-70 -80 140 160"><rect x="-57" y="-57" width="114" height="114" rx="26" fill="#ee7549"/><circle cx="28" cy="-27" r="9.500" fill="#fff"/><path d="M25-27l8-5M28-20l4-6" stroke="#ee7549" stroke-width="2"/><path fill="#fff" d="M18-22c7 3 8 8 5 13L4 10l-9 9-11 9-11 5 4 4h-13l2-8 8-3L-11 8l-6-1 10-11z"/><path stroke="#ee7549" stroke-width="1.300" d="M18-14L-6 10M10-14L-9 6M-17 7l18 4M-10 0l8 17"/></svg></div>
    <div class="app"><svg viewBox="-70 -80 140 160"><rect x="-57" y="-57" width="114" height="114" rx="26" fill="url(#g-discord)"/><path fill="#fff" d="M-12-31c-9 1-17 4-23 9-5 12-8 28-7 42 6 6 14 10 24 12l4-9c9 2 19 2 28 0l4 9c10-2 18-6 24-12 1-14-2-30-7-42-6-5-14-8-23-9l-3 5c-6-1-12-1-18 0z"/><ellipse cx="-14" cy="3" rx="8" ry="8.500" fill="#5562ea"/><ellipse cx="14" cy="3" rx="8" ry="8.500" fill="#5562ea"/><path d="M-22 20C-8 26 8 26 22 20" fill="none" stroke="#5562ea" stroke-width="2.500"/></svg></div>
    <div class="app"><svg viewBox="-70 -80 140 160"><rect x="-57" y="-57" width="114" height="114" rx="26" fill="#fdfdfd"/><path fill="#62c0ea" d="M-11-40a8 8 0 0 1 8 8v9h-8a8.500 8.500 0 0 1 0-17z"/><rect x="-40" y="-19" width="37" height="17" rx="8.500" fill="#62c0ea"/><rect x="2" y="-40" width="17" height="38" rx="8.500" fill="#5bb182"/><path fill="#5bb182" d="M24-2v-9a8 8 0 1 1 8 9z"/><path fill="#cd375a" d="M-24 2v9a8 8 0 1 1-8-9z"/><rect x="-19" y="2" width="16" height="38" rx="8" fill="#cd375a"/><rect x="2" y="2" width="38" height="17" rx="8.500" fill="#e2b24c"/><path fill="#e2b24c" d="M2 23h8a8.500 8.500 0 1 1-8 9z"/></svg></div>
    <div class="app run"><svg viewBox="-70 -80 140 160"><rect x="-57" y="-57" width="114" height="114" rx="26" fill="url(#g-steel)"/><rect x="-52" y="-52" width="104" height="105" rx="22" fill="#000"/><rect x="-44" y="-44" width="88" height="88" rx="14" fill="#262626"/><text x="-38" y="-19" font-family="Liberation Mono" font-size="30" font-weight="700" fill="#fff">&gt;_</text></svg></div>
    <div class="app run"><svg viewBox="-70 -80 140 160"><circle r="61" fill="#49aaf8" stroke="#6bbdf9" stroke-width="4"/><path fill="#fff" d="M-39-2h58c8 0 12-4 12-7-4-3-4-8-1-12 4 3 6 6 6 9 3-1 7-1 10 1-2 6-6 9-13 9C26 18 12 28-10 28-30 28-38 16-39-2z"/><path fill="#fff" d="M-32-12h8.500v8H-32zM-22-12h8.500v8H-22zM-11.500-12H-3v8h-8.500zM-1-12h8.500v8H-1zM9-12h8.500v8H9zM-22-21.500h8.500v8H-22zM-11.500-21.500H-3v8h-8.500zM-1-21.500h8.500v8H-1zM-1-31h8.500v8H-1z"/></svg></div>
    <div class="app"><svg viewBox="-70 -80 140 160"><rect x="-58" y="-57" width="116" height="114" rx="24" fill="#41082f"/><text y="24" text-anchor="middle" font-size="67" font-weight="600" letter-spacing="-2" fill="#ee63f0">Xd</text></svg></div>
    <div class="app run"><svg viewBox="-70 -80 140 160"><path fill="url(#g-ij1)" d="M-46-64L-2-60 8-38-20 40-54 61-48 24-62 12-52-6-64-14z"/><path fill="#ea3a62" d="M-26-60l24 1 24 40-40-22z"/><path fill="url(#g-ij2)" d="M24-62l40 31-2 77-50 19-24-24L8-30z"/><path fill="#2c6ff0" d="M64-31L44 10l18 36z"/><path fill="url(#g-ij3)" d="M-40-40h80v80h-80z"/><text x="-32" y="0" font-family="Liberation Mono" font-size="46" font-weight="700" letter-spacing="-5" fill="#fff">IJ</text><path fill="#fff" d="M-30 24H0v6h-30z"/></svg></div>
    <div class="app"><svg viewBox="-70 -80 140 160"><circle r="64.500" fill="url(#g-ball)"/><path fill="#0c0c0c" d="M-54 4c4 4 8 2 12-2 8-6 18-2 14 8-3 8 0 12 4 18 6 10 2 16-4 18C-42 40-52 24-54 4zM-12 12c6-4 12 2 16-2 6-4 10-2 12 4 4 10 8 12 12 4 4-8 14-10 22-8-2 20-12 34-24 42-4-4-6 2-8 4-16 2-28-2-32-8 4-2 4-4 2-10-2-8-4-20 0-26z"/><path fill="#0c0c0c" d="M44-32c3 8 10 10 8 16-4 4-12 2-12-4z"/><circle cx="6" cy="-6" r="8" fill="#0c0c0c"/><circle cx="-9" cy="-1" r="7.500" fill="#0c0c0c"/><circle cx="46" cy="-2" r="8.500" fill="#0c0c0c"/><circle cx="33" cy="4" r="3.500" fill="#333"/><circle cx="-4" cy="-20" r="2.500"/><circle cx="-22" cy="48" r="6" fill="#333"/></svg></div>
    <div class="app"><svg viewBox="-70 -80 140 160"><path fill="#fff" d="M0-66l58 33-58 33-58-33z"/><path fill="#cacaca" d="M-58-33L0 0v66l-58-33z"/><path fill="#a4a4a4" d="M58-33L0 0v66l58-33z"/><path fill="#7d7d7d" d="M0-42L37-21 0 0-37-21z"/><path fill="#4c4c4c" d="M-37-21L0 0v43l-33-19v-8l10-6-14-8z"/><path fill="#000" d="M37-21L0 0v43l33-19v-8l-10-6 14-8z"/><path fill="#cacaca" d="M-24-6l18 11v24l-7-6-7-1z"/><path fill="#a4a4a4" d="M24-6L6 5v24l7-6 7-1z"/><path fill="#fff" d="M-3-42h6v16l14 8L0-8l-17-10 14-8z"/></svg></div>
    <div class="app"><svg viewBox="-70 -80 140 160"><rect x="-68" y="-68" width="137" height="136" rx="16" fill="url(#g-mysql)" stroke="#3f73ad" stroke-width="2"/><path d="M56 49C52 40 38 34 36 28s8-2 16-3C46 16 32 16 27 10 20-8 12-34-14-41c-6-1-10-1-14-5-4-4-12-8-17-5-7 3-7 8-3 16 3 6 6 13 10 18 4 7 2 16 0 22-2 10 3 21 9 28 3-5 5-10 7-15 3 8 8 16 15 24" fill="none" stroke="#e9f6fd" stroke-width="4"/><path d="M-28-32c3 2 3 4 1 5" stroke="#e9f6fd" stroke-width="3" fill="none"/><path d="M48-36l8 13" stroke="#e9f6fd" stroke-width="11" stroke-linecap="round"/><path d="M40-48l10 15" stroke="#e9f6fd" stroke-width="5"/><path d="M31-54c-2 12 13 14 13 2l-5-5" fill="none" stroke="#e9f6fd" stroke-width="5"/></svg></div>
    <div class="app"><svg viewBox="-70 -80 140 160"><rect x="-57" y="-57" width="114" height="114" rx="26" fill="#f1f1f1"/><rect x="-48" y="-48" width="97" height="97" rx="18" fill="#9fbaea"/><path fill="#25407c" d="M-48 4h97v14h-97z"/><path fill="#b4c2d6" d="M-48 16h97v15c0 12-8 18-18 18h-61c-10 0-18-6-18-18z"/><path fill="#6a5238" d="M-48 20c10-4 20 0 24 6-8 0-20 2-24-1zM-38 42c8-6 20-4 24 2l-2 5h-14z"/><path fill="#fff" d="M-40 30c10-6 24-6 32-2l-6 6z"/><path fill="#d5d8dc" stroke="#8b9096" stroke-width="2" d="M8 20h42l10 34c-4 6-56 6-60 0z"/><path fill="#9aa0a8" d="M14 30l14-4 10 8-4 14H16z"/><ellipse cx="28" cy="54" rx="24" ry="5" fill="#f2f2f2"/><rect x="2" y="2" width="52" height="22" rx="4" fill="#151515"/><ellipse cx="28" cy="3" rx="25" ry="4.500" fill="#2c2c2c"/></svg></div>
    <div class="app"><svg viewBox="-70 -80 140 160"><rect x="-57" y="-57" width="114" height="114" rx="26" fill="url(#g-steel)"/><circle r="50" fill="#232323"/><circle r="43.500" fill="#343536" stroke="#a9adae" stroke-width="7" stroke-dasharray="2.600 1.600"/><circle r="37.500" fill="none" stroke="#b8bcbd" stroke-width="6"/><circle r="26" fill="#6f7172" stroke="#9c9fa0" stroke-width="5" stroke-dasharray="2.200 1.500"/><circle r="21" fill="#3c3d3e" stroke="#a0a3a4" stroke-width="3"/><path stroke="#c2c5c6" stroke-width="5" d="M0 0h36M0 0l-18-32M0 0l-18 32"/><circle r="5" fill="#55585a" stroke="#c8cbcc" stroke-width="2"/></svg></div>
    <div class="sep"></div>
    <div class="app run"><svg viewBox="-70 -80 140 160"><rect x="-57" y="-57" width="114" height="114" rx="26" fill="#fff"/><path fill="#5aa3e6" d="M-27-34a4 4 0 0 1 4-4h56a4 4 0 0 1 4 4v15h-64z"/><path fill="#417ccc" d="M-27-19h64V0h-64z"/><path fill="#2a58b4" d="M-27 0h64v18h-64z"/><path fill="#1e3f88" d="M-27 18h64v15a4 4 0 0 1-4 4h-56a4 4 0 0 1-4-4z"/><rect x="-47" y="-22" width="43" height="43" rx="4" fill="#1f4ea9"/><text x="-25.500" y="11" text-anchor="middle" font-size="31" font-weight="600" fill="#fff">W</text></svg></div>
    <div class="app"><svg viewBox="-70 -80 140 160"><rect x="-57" y="-57" width="114" height="114" rx="26" fill="url(#g-xcode)"/><rect x="-50" y="-50" width="101" height="101" rx="20" fill="none" stroke="#d5ecfb" stroke-width="1.800"/><circle r="46" fill="none" stroke="#9acbf4" stroke-width="1" opacity=".6"/><g fill="none" stroke="#d8edfc" stroke-width="1.800"><path d="M-6-36l-27 62c-1 8 4 10 8 6L4-29c0-9-7-12-10-7zM4-36l31 62c1 8-5 11-9 6L-6-29"/><rect x="-40" y="8" width="80" height="10" rx="5"/></g><path stroke="#5a5b63" stroke-width="10" d="M44-42L22-6"/><path stroke="#26272d" stroke-width="15" stroke-linecap="round" d="M19-3L-12 56"/><path fill="#44454d" d="M8-62c8-8 24-7 34 0 6 4 10 12 12 20l6-4 12 6-7 26-12-8-1-7c-6-2-14-2-20 2L28-38c2-8-4-18-18-16z"/></svg></div>
    <div class="app"><svg viewBox="-70 -80 140 160"><rect x="-57" y="-57" width="114" height="114" rx="26" fill="#fbfbfb"/><path stroke="#a7a7a7" stroke-width="1.600" d="M-57-28H57M-57-14H57M-57 0H57M-57 14H57M-57 28H57M-54 42H54"/><path stroke="#eeb5b5" stroke-width="1.500" d="M-38-53V54"/><path stroke="#7c8791" stroke-width="10" d="M48-66L22 0"/><path stroke="#b7d3ea" stroke-width="6" d="M46-66L20 0M38-58L19-16"/><path stroke="#8f979c" stroke-width="9" d="M22-2L4 34"/><path fill="#5c6165" d="M0 30l9 4L-10 63z"/></svg></div>
    <div class="sep s2"></div>
    <div class="app"><svg viewBox="-70 -80 140 160"><path fill="url(#g-trash)" d="M-50-50c4 18 96 18 100 0L37 50c-4 17-70 17-74 0z"/><path fill="#dcdcdc" d="M-40-46l6-14 8 2 8-8 14 10 6 6 12-14 12 14 12 2 2 10c-20 10-60 12-80-8z"/><path fill="#8e8e8e" d="M-34-56l10 6-6 6zM-6-58l8 8-4 12zM26-58l8 8-2 10z"/><path fill="#3c3a38" d="M-28-42l14 2 4 8-14-2zM14-42l10 2-4 8z"/><path fill="#4d82cc" d="M8-54l9 3-3 10-9-2z"/><path fill="#b5452c" d="M-22-42l8 2 1 6-10-2zM19-44l7 2-4 6z"/><path fill="#46bfe0" d="M-18-54l13-2-3 8-8-1z"/><path d="M-50-50C-50-58-40-62-34-63M50-50c0-6-6-9-10-10" fill="none" stroke="#8b9094" stroke-width="2"/></svg></div>
  </footer>
</section>
</body>
</html>
```
FILE: styles.css
```css
* { box-sizing: border-box; }
body { margin: 0; width: 3584px; height: 2240px; overflow: hidden; background: #030302; font-family: Inter, "Noto Sans CJK JP", sans-serif; font-size: 28px; font-variant-ligatures: none; }
svg { display: block; flex: none; }
.defs { position: absolute; }
h1, h2, p { margin: 0; }
i, em { font-style: normal; }
b { font-weight: 600; }

/* macOS menu bar */
.menubar { height: 48px; background: linear-gradient(90deg, #a3c5e7, #9bc0e5); color: #14181c; font-size: 26px; display: flex; align-items: center; }
.menus { display: flex; gap: 40.3px; align-items: center; width: 2450px; padding-left: 44px; letter-spacing: -.1px; white-space: nowrap; }
.menus b { font-weight: 700; margin-left: 4px; letter-spacing: .2px; }
.apple { width: 26px; height: 32px; margin: -4px 0 0; fill: #14181c; }
.status { display: grid; grid-template-columns: 82px 78px 72px 68px 75px 60px 82px 186px 63px 62px 153px auto; align-items: center; fill: #14181c; white-space: nowrap; letter-spacing: -.3px; }
.status .dim { color: #2e4458; }
.clock { font-variant-numeric: tabular-nums; letter-spacing: -.35px; }

.desktop { position: relative; height: 2192px; background: linear-gradient(180deg, #6796bd 0, #6796bd 60px, #030302 60px, #060503 2060px, #020202 100%); }

/* browser window */
.window { position: absolute; left: 0; top: 1px; width: 3584px; height: 1990px; border-top: 1px solid #000; border-bottom: 2px solid #47474a; border-radius: 20px; overflow: hidden; background: #0d0e0b; box-shadow: 0 0 0 1px #0a1622; }
.tabstrip { height: 84px; background: #e3dbd8; border-top: 2px solid #f1edeb; display: flex; align-items: flex-end; padding-bottom: 0; color: #222427; font-size: 24px; }
.lights { width: 187px; height: 82px; display: flex; gap: 16px; padding: 29px 0 0 42px; flex: none; }
.lights i { width: 24px; height: 24px; border-radius: 50%; }
.red { background: #ed6a5e; } .amber { background: #f4be4f; } .green { background: #61c454; }
.tab { width: 158px; height: 68px; flex: none; display: flex; align-items: center; padding-left: 15px; position: relative; }
.tab:after { content: ""; position: absolute; right: -1px; top: 15px; width: 2px; height: 40px; background: #8d8987; }
.tab.last:after, .tab.active:after { display: none; }
.tab svg { width: 32px; height: 32px; }
.tab svg.white { fill: #fff; }
.tab span { width: 83px; margin-left: 15px; padding-left: 1px; overflow: hidden; white-space: nowrap; letter-spacing: -.5px; line-height: 32px; -webkit-mask-image: linear-gradient(90deg, #000 62%, transparent 98%); mask-image: linear-gradient(90deg, #000 62%, transparent 98%); }
.tab.narrow { width: 157px; }
.tab.active { background: #fff; border-radius: 18px 18px 0 0; padding-left: 47px; box-shadow: 16px 24px 0 -8px #fff, -16px 24px 0 -8px #fff; }
.tab.active span { width: 42px; -webkit-mask-image: linear-gradient(90deg, #000 70%, transparent 96%); mask-image: linear-gradient(90deg, #000 70%, transparent 96%); }
.tab .close { width: 16px; height: 16px; margin-left: 16px; }
.newtab { width: 26px; height: 26px; margin: 0 0 21px 31px; }
.chev { width: 18px; height: 12px; margin: 0 0 27px 135px; }

.toolbar { height: 74px; background: #fff; border-bottom: 2px solid #c9c9cb; display: flex; align-items: center; position: relative; }
.navbtns { display: flex; gap: 32px; padding-left: 28px; width: 217px; }
.navbtns svg { width: 32px; height: 32px; }
.omnibox { width: 2767px; height: 56px; border-radius: 28px; background: #e1e1e1; display: flex; align-items: center; padding: 0 20px 0 27px; color: #5b5e63; }
.lock { width: 16px; height: 22px; }
.url { margin-left: 24px; letter-spacing: -.2px; flex: 1; }
.url b { font-weight: 400; color: #202124; }
.share { width: 24px; height: 30px; margin-right: 37px; }
.bm { width: 30px; height: 30px; }
.exts { display: grid; grid-template-columns: 64px 64px 64px 64px 64px 64px 58px 82px 8px; margin-left: 28px; align-items: center; }
.exts svg { width: 32px; height: 32px; }
.exts svg.me { width: 44px; height: 44px; }
.exts svg.dots { width: 8px; height: 28px; fill: #222427; }

/* web page */
.viewport { display: flex; height: 1830px; border-left: 1px solid #3b3b3a; }
.page { width: 3549px; background: #0d0e0b; color: #c99c6e; fill: #8f7152; }
.scroll { width: 34px; background: #e9b27a; padding: 8px 4px 0; }
.scroll i { display: block; height: 1830px; background: #b98e60; border-radius: 2px; }
.i32 { width: 32px; height: 32px; }
.caret { display: block; width: 0; height: 0; border: 8px solid transparent; border-top: 8px solid currentColor; border-bottom: 0; flex: none; }

.topbar { height: 116px; padding: 0 0 8px 63px; background: #161410; display: flex; align-items: center; }
.logo { width: 64px; height: 64px; fill: #e9b27e; }
.search { width: 544px; height: 60px; margin-left: 32px; border: 2px solid #30251c; border-radius: 12px; background: #0d0e0b; display: flex; align-items: center; justify-content: space-between; padding: 0 10px 0 24px; color: #b48a62; letter-spacing: -.4px; }
.search kbd { width: 39px; height: 40px; border: 2px solid #43342a; border-radius: 6px; font: 22px/35px Inter; text-align: center; color: #8f7152; }
.links { display: flex; gap: 30px; margin-left: 31px; font-weight: 600; color: #e9b27e; letter-spacing: .1px; white-space: nowrap; }
.user { margin-left: auto; margin-right: 64px; display: flex; align-items: center; color: #e9b27e; fill: #e9b27e; }
.user .add { margin: 0 6px 0 32px; }
.user .caret { margin-top: 4px; }
.avatar { width: 40px; height: 40px; margin: 4px 8px 0 32px; position: relative; }
.dot { position: absolute; right: -14px; top: -10px; width: 26px; height: 26px; border-radius: 50%; background: #3e6584; border: 3px solid #161410; background-clip: padding-box; }

.repohead { height: 116px; padding: 8px 63px 0 63px; display: flex; align-items: center; }
.repohead h1 { font-size: 40px; font-weight: 400; line-height: 48px; color: #637a82; margin-left: 15px; white-space: nowrap; display: flex; }
.repohead h1 a { letter-spacing: -1.53px; }
.repohead h1 em { color: #8f7152; margin: 0 4px 0 7px; }
.repohead h1 .name { font-weight: 600; letter-spacing: -.95px; }
.pill { width: 103px; height: 40px; border: 2px solid #30251c; border-radius: 20px; font: 500 24px/36px Inter; text-align: center; color: #8f7152; margin-left: 15px; letter-spacing: .3px; }
.actions { margin: 4px 0 0 auto; display: flex; gap: 16px; }
.btn { height: 56px; border: 2px solid #382b23; border-radius: 12px; background: #221c18; display: flex; align-items: center; font-size: 24px; font-weight: 600; white-space: nowrap; }
.pin { width: 136px; padding-left: 22px; }
.pin svg { margin-right: 16px; }
.watch { width: 273px; padding-left: 23px; }
.watch svg { margin-right: 7px; }
.watch .caret { margin-left: 15px; color: #a88058; }
.fork { width: 205px; padding-left: 24px; }
.fork svg { margin-right: 16px; }
.star { width: 276px; padding-left: 23px; }
.star svg { margin-right: 24px; }
.count { min-width: 40px; height: 40px; border-radius: 20px; background: #2d271d; text-align: center; line-height: 40px; margin-left: 10px; padding: 0 13px; }
.more { width: 68px; height: 52px; margin-left: auto; border-left: 2px solid #33271f; display: flex; align-items: center; justify-content: center; color: #8f7152; padding-left: 8px; }
.more .caret { margin-right: 12px; margin-top: 2px; }

.tabs { height: 108px; border-bottom: 2px solid #211c16; display: grid; grid-template-columns: 179px 194px 283px 210px 218px 168px 220px 215px 200px; padding-left: 95px; }
.tabs a { height: 108px; padding-bottom: 8px; padding-top: 16px; display: flex; align-items: center; gap: 14.5px; fill: #6f563f; color: #6f563f; -webkit-text-fill-color: #c99c6e; white-space: nowrap; }
.tabs a:nth-child(2) { gap: 13px; letter-spacing: -.2px; }
.tabs a.on { font-weight: 600; fill: #c99c6e; border-bottom: 4px solid #de6339; margin-left: -32px; padding-left: 32px; width: 180px; padding-bottom: 4px; gap: 12px; }

.container { width: 2432px; margin: 48px 0 0 558px; }
.subnav { display: flex; height: 64px; font-weight: 500; width: 316px; border: 2px solid #30251c; border-radius: 12px; }
.subnav a { flex: 1; display: flex; align-items: center; justify-content: center; letter-spacing: -.1px; }
.subnav .sel { flex: none; width: 186px; margin: -2px 0 -2px -2px; height: 64px; border-radius: 12px 0 0 12px; background: #32547a; color: #f0b983; }
.cols { margin-top: 40px; border-top: 2px solid #211c16; padding-top: 40px; display: flex; gap: 47px; }
.maincol { width: 1825px; }
.pickers { display: flex; gap: 24px; }
.btn.big { height: 64px; font-size: 28px; font-weight: 500; }
.tagbtn { width: 189px; padding-left: 32px; }
.tagbtn b { margin: 0 24px 0 15px; }
.tagbtn .caret { color: #8f7152; }
.target { width: 326px; padding-left: 32px; }
.target span { margin: 0 15px 0 15px; color: #b08660; letter-spacing: -.15px; }
.target b { letter-spacing: -.2px; }
.target .caret { margin-left: 21px; }
.note { font-size: 24px; line-height: 36px; color: #8f7152; margin-top: 17px; }
.input { width: 881px; height: 64px; margin-top: 29px; border: 2px solid #2d261d; border-radius: 12px; background: #010204; padding-left: 23px; line-height: 61px; letter-spacing: -.35px; }
.wtabs { height: 80px; margin-top: 30px; border-bottom: 2px solid #2d261d; display: flex; }
.write { width: 137px; height: 80px; border: 2px solid #2d261d; border-bottom: 0; border-radius: 12px 12px 0 0; background: #0d0e0b; text-align: center; line-height: 79px; letter-spacing: -.2px; }
.preview { color: #8f7152; line-height: 83px; margin-left: 40px; letter-spacing: -.2px; }
.tools { height: 100px; display: flex; align-items: center; padding: 12px 1px 0 32px; gap: 64px; }
.grp { display: flex; gap: 32px; }
.grp svg { width: 32px; height: 32px; fill: none; stroke: #8f7152; stroke-width: 3; }
.grp svg.f, .grp text { fill: #8f7152; stroke: none; }
.grp.reply { gap: 6px; align-items: center; color: #8f7152; margin-left: -20px; }
.grp.reply .caret { margin-top: 5px; }
.gen { width: 430px; margin-left: auto; margin-top: 8px; padding-left: 26px; letter-spacing: -.1px; }
.gen svg { margin-right: 14px; }
.editor { width: 1831px; height: 470px; margin-left: -3px; border: 4px solid #637a82; border-radius: 14px; overflow: hidden; }
.area { position: relative; height: 400px; border-bottom: 2px dashed #637a82; padding: 22px 17px; line-height: 36px; letter-spacing: -.5px; }
.badge { position: absolute; right: 38px; bottom: 32px; width: 48px; height: 48px; }
.grip { position: absolute; right: 1px; bottom: 1px; width: 14px; height: 14px; }
.attach { height: 62px; background: #161410; color: #8f7152; font-size: 26px; display: flex; align-items: center; justify-content: space-between; padding: 0 21px; letter-spacing: -.12px; }
.attach svg { width: 34px; height: 20px; }
.drop { height: 130px; margin-top: 26px; border: 2px dashed #2d261d; border-radius: 12px; background: #161410; color: #8f7152; display: flex; align-items: center; padding: 0 0 6px 511px; letter-spacing: -.3px; }
.drop svg { width: 38px; height: 48px; margin: 6px 20px 0 1px; }
.pre { height: 36px; margin-top: 47px; display: flex; align-items: center; letter-spacing: -.16px; }
.check { width: 26px; height: 26px; background: #3a2a22; border: 2px solid #785b41; border-radius: 5px; margin-right: 14px; }
.prenote { font-size: 24px; line-height: 36px; color: #8f7152; margin-left: 41px; margin-top: 4px; padding-bottom: 29px; }
.submit { border-top: 2px solid #211c16; margin-left: 0; padding-top: 30px; display: flex; gap: 7px; }
.btn.publish { width: 269px; justify-content: center; background: #3d5c21; border-color: #4f6c28; color: #efb981; font-weight: 600; letter-spacing: -.18px; }
.draft { width: 204px; justify-content: center; }

.side { width: 560px; white-space: nowrap; }
.side h2 { font-size: 40px; font-weight: 600; line-height: 50px; letter-spacing: -1.2px; padding-top: 5px; }
.side p { line-height: 42px; letter-spacing: -.36px; margin: 4.5px 0 20.5px; }
.side p + p { margin-top: 0; }
.side code { font-family: "DejaVu Sans Mono", monospace; font-size: 23.800px; line-height: 0; letter-spacing: 0; }
.side a { color: #637a82; }

/* desktop items behind the dock */
.files { position: absolute; left: 0; top: 1992px; width: 3584px; height: 200px; overflow: hidden; font-size: 24px; font-weight: 600; color: #fff; }
.lbl { position: absolute; line-height: 28px; white-space: nowrap; letter-spacing: .3px; }
.thumb { position: absolute; left: 17px; top: 0; width: 118px; height: 38px; }
.doc { position: absolute; left: 32px; top: 92px; width: 88px; height: 108px; }
.l1 { left: 2px; top: 80px; } .l2 { left: -2px; top: 112px; } .l3 { left: 110px; top: 112px; }
.g1, .g2, .g3, .g4 { color: #727272; }
.g1 { left: 1320px; top: -8px; } .g2 { left: 1474px; top: -14px; } .g3 { left: 1767px; top: -12px; } .g4 { left: 3337px; top: -4px; color: #888; }

.dock { position: absolute; left: 133px; top: 2010px; width: 3319px; height: 172px; border: 2px solid #474745; border-radius: 50px; background: linear-gradient(180deg, #20201e, #1a1a18); display: flex; padding-left: 2px; }
.app { width: 151px; height: 168px; position: relative; display: flex; justify-content: center; flex: none; }
.app svg { width: 140px; height: 160px; margin-top: -1px; }
.app.run:after { content: ""; position: absolute; left: 71px; bottom: 3px; width: 8px; height: 8px; border-radius: 50%; background: #a2a29e; }
.sep { width: 69.500px; height: 128px; margin-top: 20px; flex: none; background: linear-gradient(#575755, #575755) 36px 0 / 2px 100% no-repeat; }
.sep.s2 { width: 66px; background-position: 33px 0; }
```
